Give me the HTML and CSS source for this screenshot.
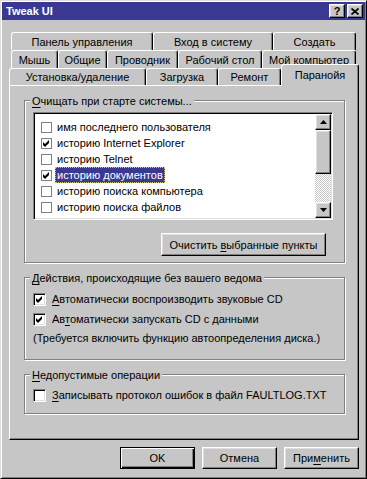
FILE: index.html
```html
<!DOCTYPE html>
<html lang="ru">
<head>
  <meta charset="UTF-8">
  <title>Tweak UI</title>
  <link rel="stylesheet" href="styles.css">
</head>
<body>

  <!-- === Dialog window === -->
  <div class="window">

    <!-- Title bar -->
    <div class="titlebar">
      <span class="title">Tweak UI</span>
      <div class="caption-btns">
        <span class="cap-btn raised">?</span>
        <span class="cap-btn raised">
          <svg width="8" height="7" viewBox="0 0 8 7"><path d="M0.5 0.5L7.5 6.5M7.5 0.5L0.5 6.5" stroke="#000" stroke-width="1.7"/></svg>
        </span>
      </div>
    </div>

    <!-- Tab rows -->
    <div class="tabs">
      <div class="tab-row">
        <div class="tab t-panel">Панель управления</div>
        <div class="tab t-login">Вход в систему</div>
        <div class="tab t-create">Создать</div>
      </div>
      <div class="tab-row">
        <div class="tab t-mouse">Мышь</div>
        <div class="tab t-general">Общие</div>
        <div class="tab t-explorer">Проводник</div>
        <div class="tab t-desktop">Рабочий стол</div>
        <div class="tab t-mycomp">Мой компьютер</div>
      </div>
      <div class="tab-row front">
        <div class="tab t-install">Установка/удаление</div>
        <div class="tab t-boot">Загрузка</div>
        <div class="tab t-repair">Ремонт</div>
        <div class="tab t-paranoia selected">Паранойя</div>
      </div>
    </div>

    <!-- Tab page -->
    <div class="panel">

      <div class="group g-clear">
        <div class="legend"><u>О</u>чищать при старте системы...</div>
        <div class="listbox">
          <ul class="list">
            <li><span class="li-check"></span><span class="li-text">имя последнего пользователя</span></li>
            <li><span class="li-check checked"><svg width="7" height="7" viewBox="0 0 7 7"><path d="M0 2L2 4L6 0V3L2 7L0 5Z" fill="#000"/></svg></span><span class="li-text">историю Internet Explorer</span></li>
            <li><span class="li-check"></span><span class="li-text">историю Telnet</span></li>
            <li><span class="li-check checked"><svg width="7" height="7" viewBox="0 0 7 7"><path d="M0 2L2 4L6 0V3L2 7L0 5Z" fill="#000"/></svg></span><span class="li-text sel">историю документов</span></li>
            <li><span class="li-check"></span><span class="li-text">историю поиска компьютера</span></li>
            <li><span class="li-check"></span><span class="li-text">историю поиска файлов</span></li>
          </ul>
          <div class="scrollbar">
            <div class="sb-btn raised"><svg width="7" height="4" viewBox="0 0 7 4"><path d="M3.5 0L7 4H0Z" fill="#000"/></svg></div>
            <div class="sb-thumb raised"></div>
            <div class="sb-track"></div>
            <div class="sb-btn raised"><svg width="7" height="4" viewBox="0 0 7 4"><path d="M0 0H7L3.5 4Z" fill="#000"/></svg></div>
          </div>
        </div>
        <div class="btn-row">
          <button class="btn wide">Очистить <u>в</u>ыбранные пункты</button>
        </div>
      </div>

      <div class="group g-auto">
        <div class="legend"><u>Д</u>ействия, происходящие без вашего ведома</div>
        <label class="check-row first">
          <span class="checkbox"><svg width="7" height="7" viewBox="0 0 7 7"><path d="M0 2L2 4L6 0V3L2 7L0 5Z" fill="#000"/></svg></span>
          <span><u>А</u>втоматически воспроизводить звуковые CD</span>
        </label>
        <label class="check-row">
          <span class="checkbox"><svg width="7" height="7" viewBox="0 0 7 7"><path d="M0 2L2 4L6 0V3L2 7L0 5Z" fill="#000"/></svg></span>
          <span>Ав<u>т</u>оматически запускать CD с данными</span>
        </label>
        <div class="note">(Требуется включить функцию автоопределения диска.)</div>
      </div>

      <div class="group g-fault">
        <div class="legend"><u>Н</u>едопустимые операции</div>
        <label class="check-row first">
          <span class="checkbox"></span>
          <span><u>З</u>аписывать протокол ошибок в файл FAULTLOG.TXT</span>
        </label>
      </div>

    </div>

    <!-- Dialog buttons -->
    <div class="dlg-btns">
      <button class="btn default">OK</button>
      <button class="btn">Отмена</button>
      <button class="btn">При<u>м</u>енить</button>
    </div>

  </div>
</body>
</html>
```

FILE: styles.css
```css
/* Base */
* {
  box-sizing: border-box;
}

body {
  margin: 0;
  background-color: #c6c6c6;
  font-family: "Liberation Sans", Arial, sans-serif;
  font-size: 11px;
  color: #000;
}

u {
  text-decoration-thickness: 1px;
  text-underline-offset: 2px;
}

/* 3D bevel used by buttons and scroll parts */
.raised {
  background-color: #c6c6c6;
  border: 1px solid;
  border-color: #fff #000 #000 #fff;
  box-shadow: inset -1px -1px #808080, inset 1px 1px #dfdfdf;
}

/* Window frame */
.window {
  width: 367px;
  height: 479px;
  padding: 1px;
  border: 1px solid;
  border-color: #dfdfdf #000 #000 #dfdfdf;
  box-shadow: inset 1px 1px #fff, inset -1px -1px #808080;
}

/* Title bar */
.titlebar {
  height: 18px;
  background-color: #393991;
  display: flex;
  align-items: center;
  justify-content: space-between;
  padding: 0 2px 0 4px;
}

.title {
  color: #fff;
  font-weight: bold;
  font-size: 11px;
}

.caption-btns {
  display: flex;
  gap: 2px;
}

.cap-btn {
  width: 16px;
  height: 14px;
  display: flex;
  align-items: center;
  justify-content: center;
  font-weight: bold;
  font-size: 11px;
  line-height: 1;
}

/* Tabs */
.tabs {
  margin-top: 12px;
}

.tab-row {
  display: flex;
  align-items: flex-start;
  height: 18px;
  margin-left: 9px;
}

.tab-row.front {
  height: 17px;
  margin-left: 7px;
}

.tab {
  height: 18px;
  display: flex;
  align-items: center;
  justify-content: center;
  white-space: nowrap;
  background-color: #c6c6c6;
  border: 1px solid #fff;
  border-right-color: #000;
  border-bottom: none;
  border-radius: 3px 3px 0 0;
  box-shadow: inset -1px 0 #808080;
}

.front .tab {
  height: 17px;
}

.front .tab.selected {
  height: 22px;
  margin-top: -4px;
  position: relative;
  z-index: 1;
  padding-bottom: 2px;
}

.t-panel { width: 142px; }
.t-login { width: 120px; }
.t-create { width: 83px; }
.t-mouse { width: 47px; }
.t-general { width: 49px; }
.t-explorer { width: 71px; }
.t-desktop { width: 84px; }
.t-mycomp { width: 94px; }
.t-install { width: 137px; }
.t-boot { width: 72px; }
.t-repair { width: 63px; }
.t-paranoia { width: 78px; }

/* Tab page */
.panel {
  margin-left: 7px;
  width: 350px;
  height: 355px;
  border: 1px solid;
  border-color: #fff #000 #000 #fff;
  box-shadow: inset -1px -1px #808080;
  padding: 14px 0 0 14px;
}

/* Etched group boxes */
.group {
  width: 321px;
  border: 1px solid #808080;
  box-shadow: 1px 1px #fff, inset 1px 1px #fff;
}

.legend {
  width: max-content;
  margin: -7px 0 0 5px;
  padding: 0 2px;
  line-height: 14px;
  background-color: #c6c6c6;
}

.g-clear {
  height: 163px;
}

.g-auto {
  margin-top: 14px;
  padding-bottom: 14px;
}

.g-fault {
  margin-top: 14px;
  padding-bottom: 8px;
}

/* List with checkboxes */
.listbox {
  display: flex;
  width: 300px;
  height: 108px;
  margin: 4px 0 0 8px;
  padding: 1px;
  background-color: #fff;
  border: 1px solid;
  border-color: #808080 #fff #fff #808080;
  box-shadow: inset 1px 1px #000, inset -1px -1px #dfdfdf;
}

.list {
  flex: 1;
  list-style: none;
  margin: 0;
  padding: 5px 0 0 6px;
}

.list li {
  height: 16px;
  display: flex;
  align-items: center;
}

.li-check {
  width: 11px;
  height: 11px;
  border: 1px solid #808080;
  margin-right: 3px;
  display: flex;
  align-items: center;
  justify-content: center;
}

.li-text {
  height: 16px;
  line-height: 16px;
  padding: 0 2px;
  white-space: nowrap;
}

.li-text.sel {
  background-color: #393991;
  color: #fff;
  outline: 1px dotted #c8c878;
  outline-offset: -1px;
}

/* Scrollbar */
.scrollbar {
  width: 16px;
  display: flex;
  flex-direction: column;
}

.sb-btn {
  height: 16px;
  display: flex;
  align-items: center;
  justify-content: center;
}

.sb-thumb {
  height: 44px;
}

.sb-track {
  flex: 1;
  background: repeating-conic-gradient(#c6c6c6 0 25%, #fff 0 50%) 0 0 / 2px 2px;
}

/* Buttons */
.btn-row {
  display: flex;
  justify-content: flex-end;
  margin: 13px 18px 0 0;
}

.btn {
  width: 75px;
  height: 22px;
  padding: 0;
  font: inherit;
  color: #000;
  background-color: #c6c6c6;
  border: 1px solid;
  border-color: #fff #000 #000 #fff;
  box-shadow: inset -1px -1px #808080, inset 1px 1px #dfdfdf;
}

.btn.wide {
  width: 165px;
  height: 23px;
}

.btn.default {
  border-color: #000;
  box-shadow: inset 1px 1px #fff, inset -1px -1px #000, inset -2px -2px #808080;
}

/* Check rows */
.check-row {
  display: flex;
  align-items: center;
  height: 20px;
  margin-left: 8px;
  white-space: nowrap;
}

.check-row.first {
  margin-top: 4px;
}

.g-fault .check-row.first {
  margin-top: 3px;
}

.checkbox {
  width: 13px;
  height: 13px;
  margin-right: 6px;
  background-color: #fff;
  border: 1px solid;
  border-color: #808080 #fff #fff #808080;
  box-shadow: inset 1px 1px #000, inset -1px -1px #dfdfdf;
  display: flex;
  align-items: center;
  justify-content: center;
}

.note {
  margin: 2px 0 0 8px;
  line-height: 14px;
}

/* Dialog buttons */
.dlg-btns {
  display: flex;
  justify-content: flex-end;
  gap: 7px;
  margin-top: 7px;
  padding-right: 6px;
}
```
